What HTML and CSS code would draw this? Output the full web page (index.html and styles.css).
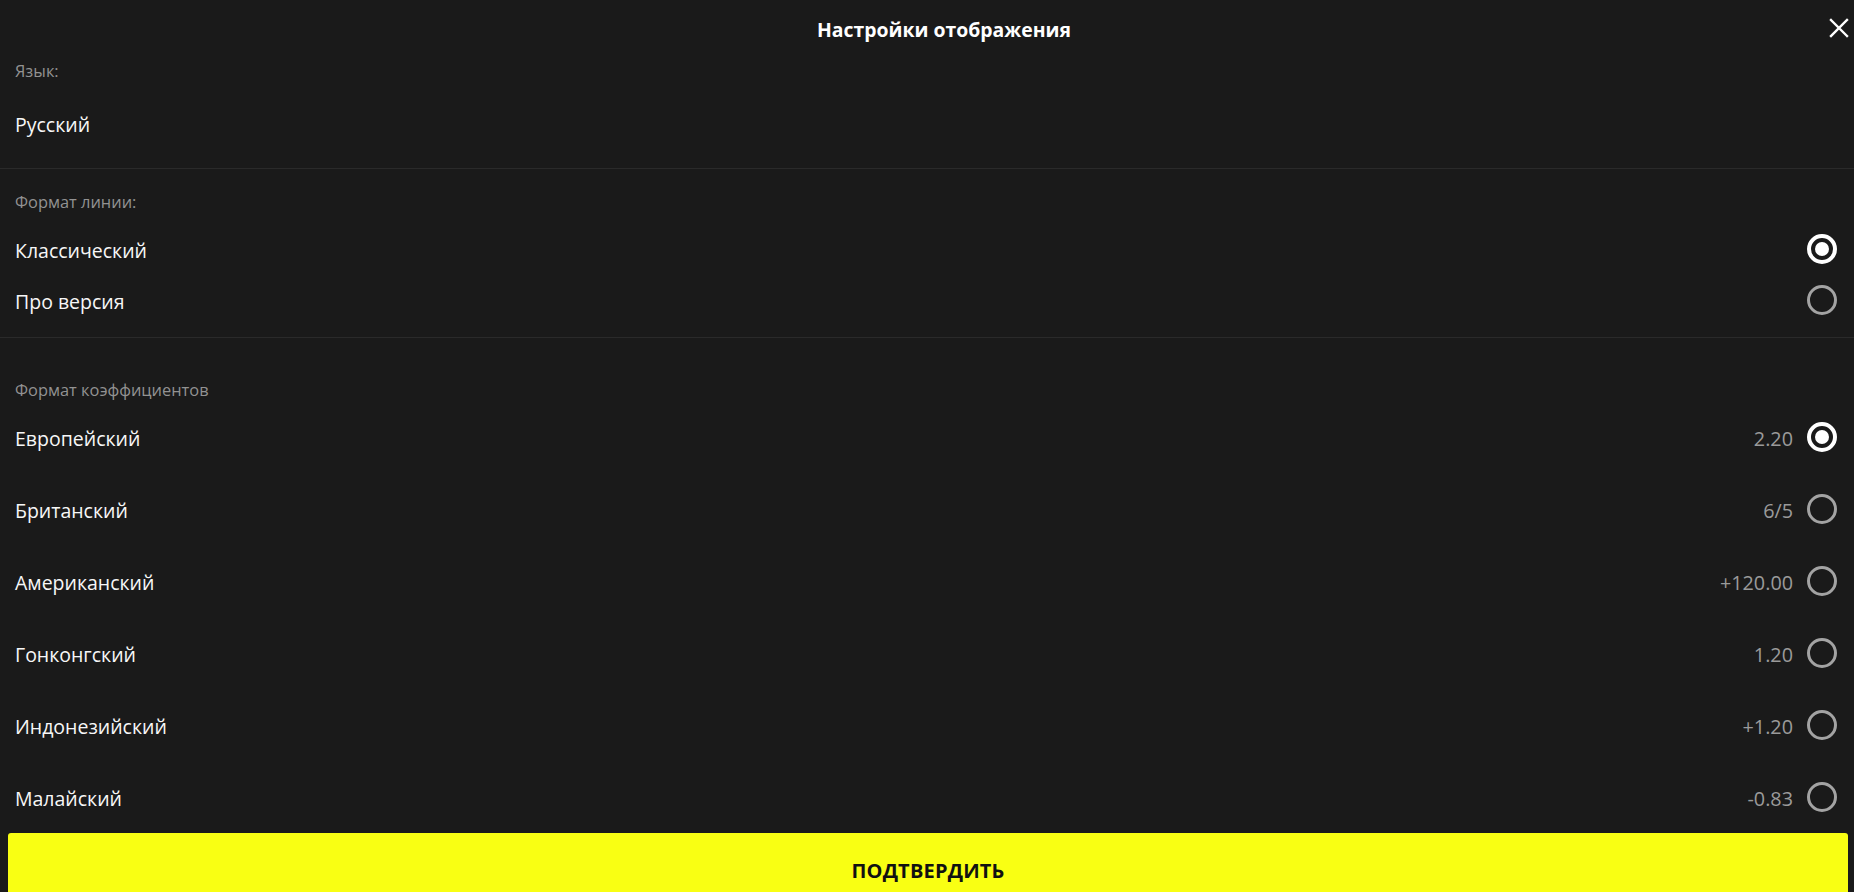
FILE: index.html
```html
<!DOCTYPE html>
<html lang="ru">
<head>
<meta charset="utf-8">
<title>Настройки отображения</title>
<link rel="stylesheet" href="styles.css">
</head>
<body>
<div class="modal">
  <header class="header">
    <h1 class="title">Настройки отображения</h1>
    <button class="close" aria-label="Закрыть">
      <svg width="20" height="20" viewBox="0 0 20 20"><path d="M2 2 L18 18 M18 2 L2 18" stroke="#fff" stroke-width="2.4" stroke-linecap="square" fill="none"/></svg>
    </button>
  </header>

  <section class="section s-lang">
    <div class="label">Язык:</div>
    <div class="lang-value">Русский</div>
  </section>

  <section class="section s-line">
    <div class="label">Формат линии:</div>
    <div class="list list-line">
      <div class="row"><span class="name">Классический</span><span class="radio on"></span></div>
      <div class="row"><span class="name">Про версия</span><span class="radio"></span></div>
    </div>
  </section>

  <section class="section s-odds">
    <div class="label">Формат коэффициентов</div>
    <div class="list list-odds">
      <div class="row"><span class="name">Европейский</span><span class="val">2.20</span><span class="radio on"></span></div>
      <div class="row"><span class="name">Британский</span><span class="val">6/5</span><span class="radio"></span></div>
      <div class="row"><span class="name">Американский</span><span class="val">+120.00</span><span class="radio"></span></div>
      <div class="row"><span class="name">Гонконгский</span><span class="val">1.20</span><span class="radio"></span></div>
      <div class="row"><span class="name">Индонезийский</span><span class="val">+1.20</span><span class="radio"></span></div>
      <div class="row"><span class="name">Малайский</span><span class="val">-0.83</span><span class="radio"></span></div>
    </div>
  </section>

  <button class="confirm">ПОДТВЕРДИТЬ</button>
</div>
</body>
</html>
```

FILE: styles.css
```css
html, body {
  margin: 0;
  padding: 0;
  height: 100%;
  overflow: hidden;
  background: #1a1a1a;
}
body {
  font-family: "Open Sans", "Noto Sans", "Liberation Sans", sans-serif;
  color: #f2f2f2;
}
.modal {
  display: flex;
  flex-direction: column;
  height: 100vh;
  overflow: hidden;
}
.header {
  display: flex;
  align-items: center;
  height: 60px;
  padding-right: 5px;
  flex-shrink: 0;
}
.title {
  flex: 1;
  margin: 0;
  padding-left: 59px;
  text-align: center;
  font-size: 19.4px;
  font-weight: 700;
  color: #fff;
  line-height: 24px;
}
.close {
  width: 20px;
  height: 20px;
  padding: 0;
  margin: -4px 0 0 0;
  border: 0;
  background: none;
  display: flex;
  cursor: pointer;
}
.section {
  padding: 0 17px 0 15px;
  flex-shrink: 0;
}
.label {
  font-size: 16.4px;
  line-height: 22px;
  color: #929292;
}
.s-lang {
  padding-bottom: 32px;
  border-bottom: 1px solid #2a2a2a;
}
.lang-value {
  margin-top: 32px;
  font-size: 19.5px;
  line-height: 22px;
  color: #f7f7f7;
}
.s-line {
  padding-top: 22px;
  padding-bottom: 12px;
  border-bottom: 1px solid #2a2a2a;
}
.list-line {
  margin-top: 10px;
}
.list-line .row {
  height: 51px;
}
.s-odds {
  padding-top: 41px;
}
.list-odds .row {
  height: 72px;
}
.row {
  display: flex;
  align-items: center;
}
.name {
  flex: 1;
  font-size: 19.5px;
  color: #f7f7f7;
  padding-top: 3px;
}
.val {
  font-size: 19.8px;
  color: #9a9a9a;
  margin-right: 14px;
  padding-top: 2px;
}
.radio {
  width: 30px;
  height: 30px;
  box-sizing: border-box;
  border-radius: 50%;
  border: 3px solid #a3a3a3;
  display: flex;
  align-items: center;
  justify-content: center;
}
.radio.on {
  border: 4px solid #fff;
}
.radio.on::after {
  content: "";
  width: 14px;
  height: 14px;
  border-radius: 50%;
  background: #fff;
}
.confirm {
  flex-shrink: 0;
  margin: 0 6px 0 8px;
  height: 74px;
  border: 0;
  border-radius: 3px;
  background: #f9ff13;
  color: #111;
  font-family: "Open Sans", "Noto Sans", "Liberation Sans", sans-serif;
  font-size: 20px;
  font-weight: 700;
  letter-spacing: 0.2px;
}
```
